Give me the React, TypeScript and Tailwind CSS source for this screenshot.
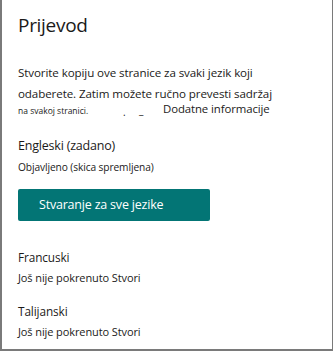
import React from "react";

export default function App() {
  return (
    <div
      className="w-[333px] h-[351px] bg-white border-l-2 border-r border-b-2 border-[#7a7a7a] text-[#1b1a19] overflow-hidden"
      style={{ fontFamily: '"Open Sans", "Noto Sans", sans-serif' }}
    >
      <div className="pl-[16px] pr-4">
        <h1 className="text-[19px] leading-[24px] pt-[13px] tracking-[-0.3px]">Prijevod</h1>
        <p className="mt-[25px] text-[11.6px] leading-[21px] tracking-[-0.1px] pr-[40px]">
          Stvorite kopiju ove stranice za svaki jezik koji odaberete. Zatim možete ručno prevesti sadržaj
        </p>
        <div className="flex items-end h-[18px] -mt-[4px]">
          <span className="text-[8.5px] leading-[14px] w-[105px]">na svakoj stranici.</span>
          <span className="text-[10px] leading-[10px] w-[16px] mb-[1px]">.</span>
          <span className="text-[10px] leading-[10px] w-[24px] mb-[3px]">_</span>
          <span className="text-[11.4px] leading-[18px] tracking-[-0.1px]">Dodatne informacije</span>
        </div>
        <div className="mt-[18px] text-[12.5px] leading-[20px] tracking-[-0.2px]">Engleski (zadano)</div>
        <div className="mt-[1px] text-[10.2px] leading-[20px] tracking-[-0.1px]">Objavljeno (skica spremljena)</div>
        <button className="mt-[12px] w-[192px] h-[32px] bg-[#037575] rounded-[2px] text-white text-[12.5px] text-left pl-[21px] tracking-[-0.2px]">
          Stvaranje za sve jezike
        </button>
        <div className="mt-[26px] text-[11.8px] leading-[20px] tracking-[-0.1px]">Francuski</div>
        <div className="mt-[1px] text-[11px] leading-[20px] tracking-[-0.1px]">Još nije pokrenuto Stvori</div>
        <div className="mt-[13px] text-[11.8px] leading-[20px] tracking-[-0.1px]">Talijanski</div>
        <div className="mt-[1px] text-[11px] leading-[20px] tracking-[-0.1px]">Još nije pokrenuto Stvori</div>
      </div>
    </div>
  );
}
